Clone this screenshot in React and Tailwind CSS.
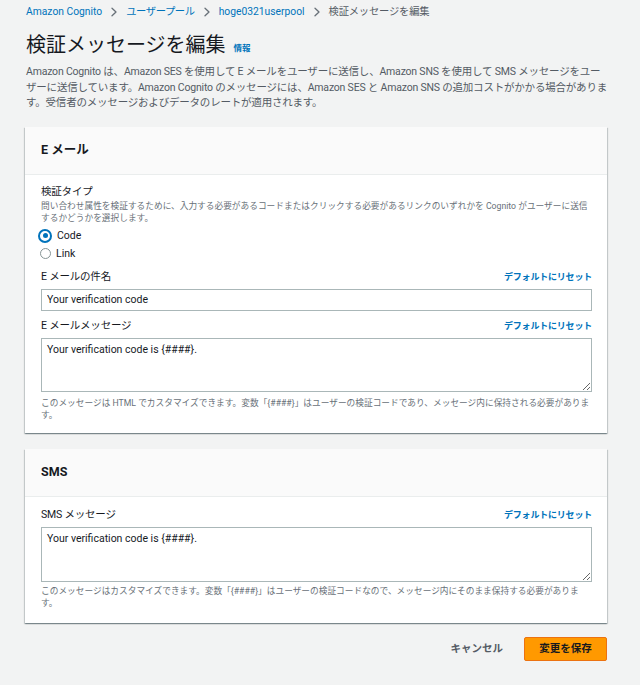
const FONT = { fontFamily: 'Roboto, "Noto Sans CJK JP", sans-serif' };

function ResetLink() {
  return (
    <a href="#" className="text-[9px] font-bold leading-[14px] tracking-[-0.2px] text-[#0073bb]">
      デフォルトにリセット
    </a>
  );
}

function FieldHeader({ label }) {
  return (
    <div className="flex h-[14px] items-center justify-between">
      <span className="text-[10.5px] leading-[14px] tracking-[-0.2px] text-[#16191f]">{label}</span>
      <ResetLink />
    </div>
  );
}

function Card({ title, children }) {
  return (
    <section className="bg-white shadow-[0_1px_1px_0_rgba(0,28,36,0.3),1px_1px_1px_0_rgba(0,28,36,0.15),-1px_1px_1px_0_rgba(0,28,36,0.15)]">
      <div className="flex h-[48px] items-center border-b border-[#eaeded] bg-[#fafafa] pl-[16px] pr-[15px]">
        <h2 className="text-[12.5px] font-bold text-[#16191f]">{title}</h2>
      </div>
      {children}
    </section>
  );
}

function Radio({ label, checked }) {
  return (
    <label className="flex h-[18px] items-center text-[10.5px] text-[#16191f]">
      {checked ? (
        <span className="ml-[-3px] flex h-[14px] w-[14px] items-center justify-center rounded-full border-[2.5px] border-[#0073bb] bg-white">
          <span className="h-[5px] w-[5px] rounded-full bg-[#0073bb]" />
        </span>
      ) : (
        <span className="ml-[-1px] h-[11px] w-[11px] rounded-full border border-[#879596] bg-white" />
      )}
      <span className="ml-[5px]">{label}</span>
    </label>
  );
}

function Chevron() {
  return (
    <svg width="24" height="10" viewBox="0 0 24 10" className="shrink-0">
      <path d="M10 1.2 L14 5 L10 8.8" fill="none" stroke="#687078" strokeWidth="1.3" strokeLinecap="round" strokeLinejoin="round" />
    </svg>
  );
}

export default function App() {
  return (
    <div className="min-h-[685px] bg-[#f2f3f3] pl-[25px] pr-[33px] pb-6 text-[#16191f]" style={FONT}>
      <nav className="flex h-[24px] items-center pl-[1px] text-[10.3px]">
        <a className="text-[#0073bb]" href="#">Amazon Cognito</a>
        <Chevron />
        <a className="tracking-[-0.4px] text-[#0073bb]" href="#">ユーザープール</a>
        <Chevron />
        <a className="text-[#0073bb]" href="#">hoge0321userpool</a>
        <Chevron />
        <span className="tracking-[-0.2px] text-[#545b64]">検証メッセージを編集</span>
      </nav>

      <div className="mt-[7px] flex items-end gap-[8px] pl-[1px]">
        <h1 className="text-[20px] leading-[28px] text-[#16191f]">検証メッセージを編集</h1>
        <a href="#" className="mb-[4px] text-[8.5px] font-bold text-[#0073bb]">情報</a>
      </div>
      <p className="mt-[5px] pl-[1px] text-[10.5px] leading-[15.5px] tracking-[-0.2px] text-[#545b64]">
        Amazon Cognito は、Amazon SES を使用して E メールをユーザーに送信し、Amazon SNS を使用して SMS メッセージをユーザーに送信しています。Amazon Cognito のメッセージには、Amazon SES と Amazon SNS の追加コストがかかる場合があります。受信者のメッセージおよびデータのレートが適用されます。
      </p>

      <div className="mt-[16px] flex flex-col gap-[16px]">
        <Card title="E メール">
          <div className="pl-[16px] pr-[15px] pb-[12px] pt-[9px]">
            <div className="text-[10.5px] leading-[16px] tracking-[-0.2px]">検証タイプ</div>
            <p className="text-[8.7px] leading-[12px] text-[#687078]">
              問い合わせ属性を検証するために、入力する必要があるコードまたはクリックする必要があるリンクのいずれかを Cognito がユーザーに送信するかどうかを選択します。
            </p>
            <div className="mt-[3px] flex flex-col">
              <Radio label="Code" checked />
              <Radio label="Link" />
            </div>

            <div className="mt-[7px]">
              <FieldHeader label="E メールの件名" />
              <input
                readOnly
                value="Your verification code"
                className="mt-[5px] block h-[22px] w-full border border-[#aab7b8] px-[5px] text-[10.5px] text-[#16191f] outline-none"
              />
            </div>

            <div className="mt-[8px]">
              <FieldHeader label="E メールメッセージ" />
              <textarea
                readOnly
                value="Your verification code is {####}."
                className="mt-[5px] block h-[54px] w-full resize-y border border-[#aab7b8] px-[5px] py-[3px] text-[10.5px] text-[#16191f] outline-none"
              />
              <p className="mt-[5px] text-[8.7px] leading-[12px] text-[#687078]">
                このメッセージは HTML でカスタマイズできます。変数「{"{####}"}」はユーザーの検証コードであり、メッセージ内に保持される必要があります。
              </p>
            </div>
          </div>
        </Card>

        <Card title="SMS">
          <div className="pl-[16px] pr-[15px] pb-[14px] pt-[11px]">
            <FieldHeader label="SMS メッセージ" />
            <textarea
              readOnly
              value="Your verification code is {####}."
              className="mt-[5px] block h-[55px] w-full resize-y border border-[#aab7b8] px-[5px] py-[3px] text-[10.5px] text-[#16191f] outline-none"
            />
            <p className="mt-[3px] text-[8.7px] leading-[12px] text-[#687078]">
              このメッセージはカスタマイズできます。変数「{"{####}"}」はユーザーの検証コードなので、メッセージ内にそのまま保持する必要があります。
            </p>
          </div>
        </Card>
      </div>

      <div className="mt-[14px] flex items-center justify-end gap-[21px]">
        <button type="button" className="text-[10.5px] font-bold text-[#545b64]">
          キャンセル
        </button>
        <button
          type="button"
          className="h-[24px] w-[83px] rounded-[2px] border border-[#ec7211] bg-[#ff9900] text-[10.5px] font-bold text-[#16191f]"
        >
          変更を保存
        </button>
      </div>
    </div>
  );
}
